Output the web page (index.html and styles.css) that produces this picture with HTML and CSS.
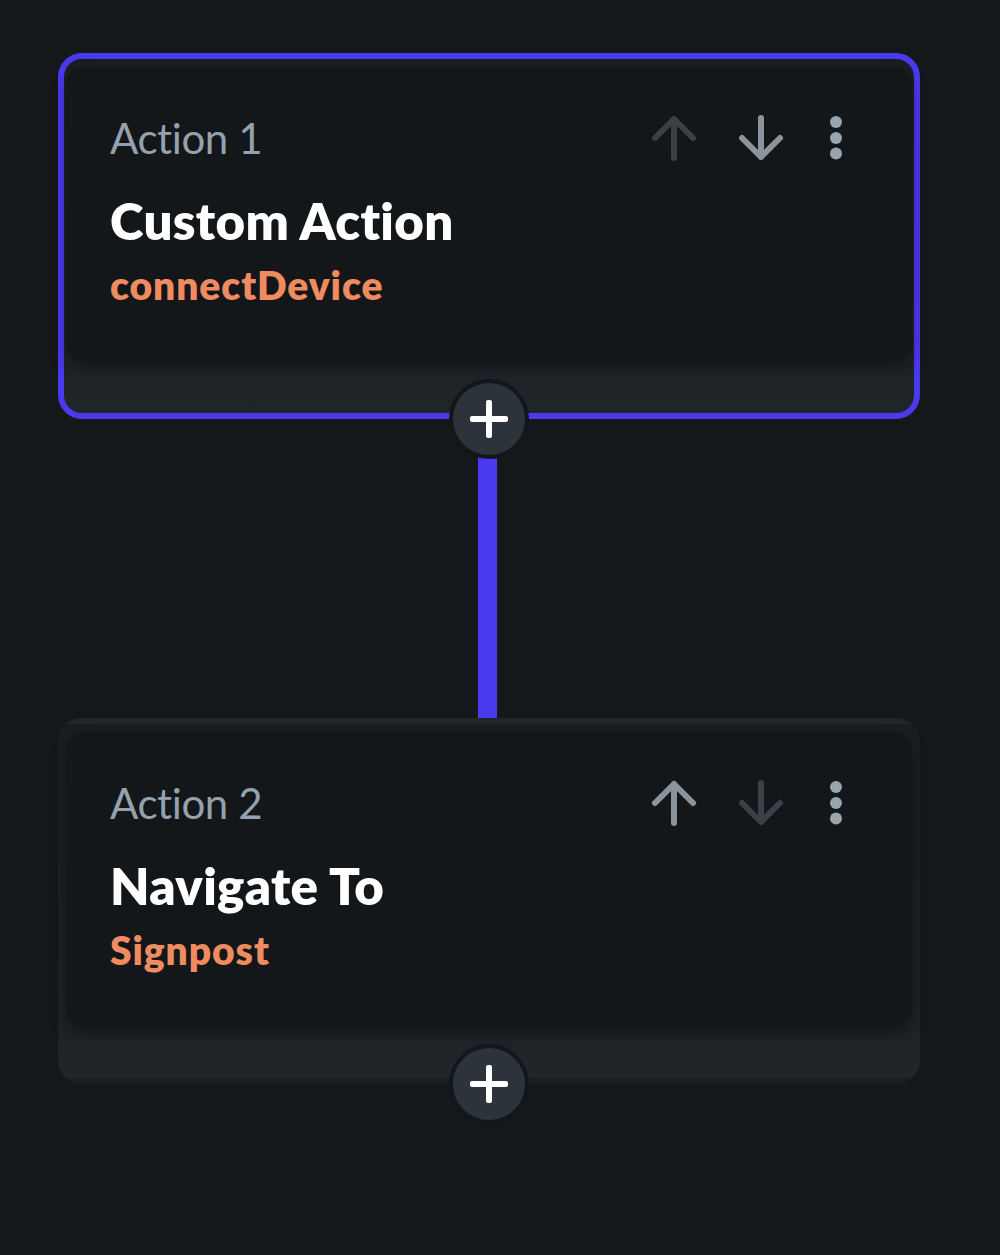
FILE: index.html
```html
<!DOCTYPE html>
<html lang="en">
<head>
<meta charset="utf-8">
<title>Action Flow</title>
<link rel="stylesheet" href="styles.css">
</head>
<body>
<main class="flow">
  <section class="action-card selected">
    <div class="action-body">
      <div class="action-head">
        <span class="action-index">Action 1</span>
        <div class="action-tools">
          <svg class="tool dim" viewBox="0 0 48 48" width="48" height="48"><path d="M24 44V5M5 24L24 5L43 24"/></svg>
          <svg class="tool" viewBox="0 0 48 48" width="48" height="48"><path d="M24 4V43M5 24L24 43L43 24"/></svg>
          <svg class="dots" viewBox="0 0 24 48" width="24" height="48"><circle cx="12" cy="8" r="6"/><circle cx="12" cy="24" r="6"/><circle cx="12" cy="39.5" r="6"/></svg>
        </div>
      </div>
      <div class="action-title">Custom Action</div>
      <div class="action-sub">connectDevice</div>
    </div>
    <button class="add-btn" type="button" aria-label="Add action"><span class="plus"></span></button>
  </section>
  <div class="connector"></div>
  <section class="action-card">
    <div class="action-body">
      <div class="action-head">
        <span class="action-index">Action 2</span>
        <div class="action-tools">
          <svg class="tool" viewBox="0 0 48 48" width="48" height="48"><path d="M24 44V5M5 24L24 5L43 24"/></svg>
          <svg class="tool dim" viewBox="0 0 48 48" width="48" height="48"><path d="M24 4V43M5 24L24 43L43 24"/></svg>
          <svg class="dots" viewBox="0 0 24 48" width="24" height="48"><circle cx="12" cy="8" r="6"/><circle cx="12" cy="24" r="6"/><circle cx="12" cy="39.5" r="6"/></svg>
        </div>
      </div>
      <div class="action-title">Navigate To</div>
      <div class="action-sub">Signpost</div>
    </div>
    <button class="add-btn" type="button" aria-label="Add action"><span class="plus"></span></button>
  </section>
</main>
</body>
</html>
```
FILE: styles.css
```css
* { box-sizing: border-box; }
html, body {
  margin: 0;
  padding: 0;
  background: #14181b;
}
body {
  width: 1000px;
  height: 1255px;
  overflow: hidden;
  font-family: "Lato", "Noto Sans", sans-serif;
  font-variant-ligatures: none;
  font-feature-settings: "liga" 0, "clig" 0, "dlig" 0;
}
.flow {
  display: flex;
  flex-direction: column;
  width: 862px;
  margin-left: 58px;
  padding-top: 53px;
}
.action-card {
  position: relative;
  height: 366px;
  border: 6px solid transparent;
  border-radius: 24px;
  padding: 8px 2px 0 2px;
  background: linear-gradient(180deg, #1a1e22 0%, #1c2024 60%, #20252a 100%);
}
.action-card.selected {
  border-color: #4b39ef;
}
.action-body {
  height: 294px;
  background: #14171a;
  border-radius: 18px;
  padding: 46px 64px 0 44px;
  box-shadow: 0 8px 16px rgba(0, 0, 0, 0.35);
}
.action-head {
  display: flex;
  align-items: center;
  justify-content: space-between;
}
.action-index {
  font-size: 42px;
  line-height: 1.2;
  color: #95a1ac;
  font-weight: 400;
  letter-spacing: -0.4px;
}
.action-tools {
  display: flex;
  align-items: center;
  gap: 39px;
}
.tool path {
  fill: none;
  stroke: #8a949d;
  stroke-width: 6;
  stroke-linecap: round;
  stroke-linejoin: round;
}
.tool.dim path {
  stroke: #3a4047;
}
.dots circle {
  fill: #9aa4ad;
}
.action-title {
  margin-top: 27px;
  font-size: 51px;
  line-height: 1.2;
  font-weight: 800;
  color: #ffffff;
  letter-spacing: 0.3px;
}
.action-sub {
  margin-top: 10px;
  font-size: 39px;
  line-height: 1.2;
  font-weight: 800;
  color: #ee8b60;
  letter-spacing: 0.9px;
}
.add-btn {
  position: absolute;
  left: 50%;
  bottom: -46px;
  transform: translateX(-50%);
  width: 80px;
  height: 80px;
  padding: 0;
  border-radius: 50%;
  border: 4px solid #13161a;
  background: #2c333a;
  display: flex;
  align-items: center;
  justify-content: center;
  cursor: pointer;
}
.plus {
  position: relative;
  width: 38px;
  height: 38px;
}
.plus::before,
.plus::after {
  content: "";
  position: absolute;
  background: #ffffff;
  border-radius: 2px;
}
.plus::before {
  left: 0;
  right: 0;
  top: 16px;
  height: 6px;
}
.plus::after {
  top: 0;
  bottom: 0;
  left: 16px;
  width: 6px;
}
.connector {
  align-self: center;
  width: 19px;
  height: 299px;
  margin-left: -3px;
  background: #4b39ef;
}
```
